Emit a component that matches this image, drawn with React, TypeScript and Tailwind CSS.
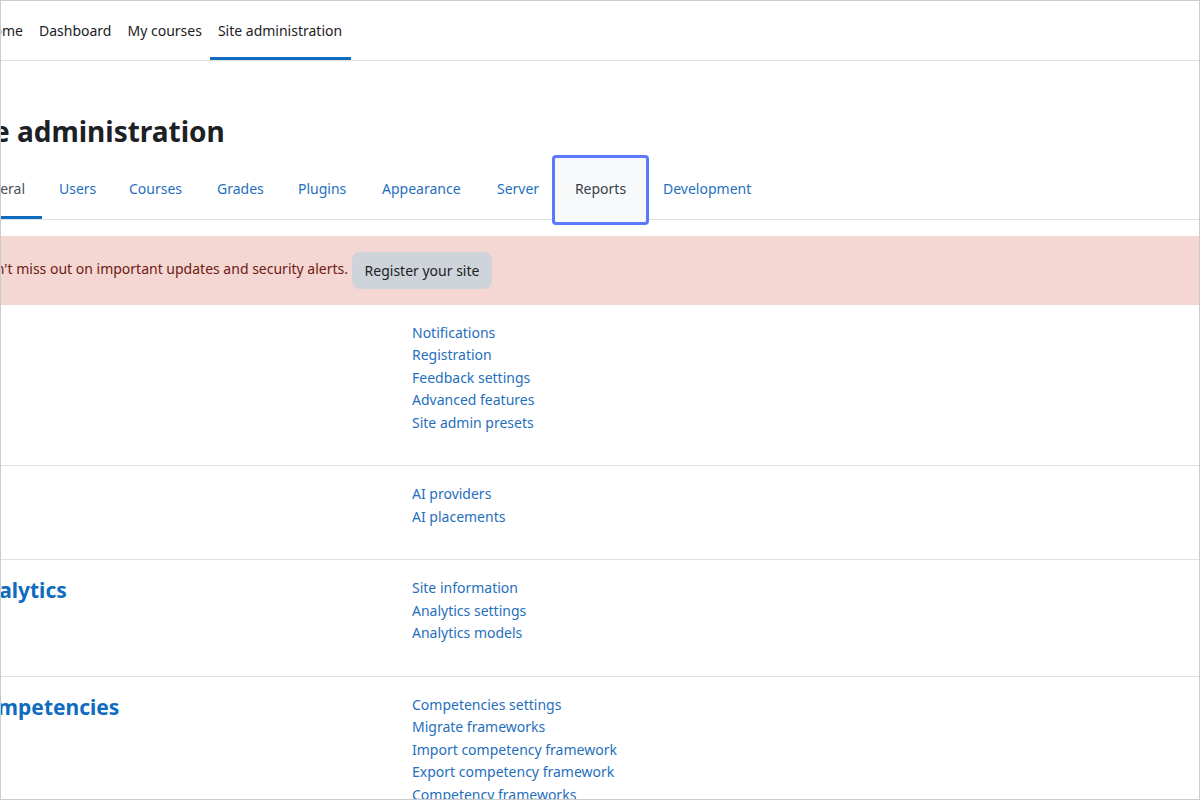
const tabs = [
  { label: "Users", w: "w-[70px]" },
  { label: "Courses", w: "w-[88px]" },
  { label: "Grades", w: "w-[81px]" },
  { label: "Plugins", w: "w-[84px]" },
  { label: "Appearance", w: "w-[115px]" },
  { label: "Server", w: "w-[55px]" },
];

const sections = [
  {
    title: "",
    indent: "",
    rowClass: "h-[161px] pt-[16.5px]",
    links: ["Notifications", "Registration", "Feedback settings", "Advanced features", "Site admin presets"],
  },
  {
    title: "",
    indent: "",
    rowClass: "h-[94px] pt-[17px]",
    links: ["AI providers", "AI placements"],
  },
  {
    title: "Analytics",
    indent: "-ml-[30px] -mt-px",
    rowClass: "h-[117px] pt-[17px]",
    links: ["Site information", "Analytics settings", "Analytics models"],
  },
  {
    title: "Competencies",
    indent: "-ml-[30px] -mt-px",
    rowClass: "pt-[16.5px]",
    links: ["Competencies settings", "Migrate frameworks", "Import competency framework", "Export competency framework", "Competency frameworks"],
  },
];

export default function App() {
  return (
    <div className="w-[1200px] h-[800px] overflow-hidden bg-white border border-[#cccccc] text-[14px] text-[#1d2125] font-['Noto_Sans',sans-serif]">
      {/* Top nav */}
      <div className="h-[60px] flex items-stretch border-b border-[#dee2e6]">
        <div className="w-[22px] overflow-hidden flex items-center justify-end whitespace-nowrap">Home</div>
        <div className="ml-[16px] flex items-center">Dashboard</div>
        <div className="ml-[16px] flex items-center">My courses</div>
        <div className="ml-[8px] w-[141px] px-[8px] pt-[3px] flex items-center border-b-[3px] border-[#0f6cbf] whitespace-nowrap">Site administration</div>
      </div>

      {/* Heading */}
      <h1 className="h-[95px] pt-[51px] whitespace-nowrap text-[28px] leading-[38px] font-bold -ml-[44px]">Site administration</h1>

      {/* Tabs */}
      <div className="h-[64px] flex items-stretch border-b border-[#dee2e6]">
        <div className="w-[41px] overflow-hidden flex items-center justify-end pr-[17px] pt-[5px] border-b-[3px] border-[#0f6cbf] text-[#495057] whitespace-nowrap">General</div>
        <div className="flex items-stretch pl-[17px] pt-[2px] text-[#1f6fbd]">
          {tabs.map((t) => (
            <div key={t.label} className={`${t.w} flex items-center`}>{t.label}</div>
          ))}
        </div>
        <div className="relative w-[97px] flex items-center justify-center pt-[2px]">
          <div className="absolute -top-px -bottom-[6px] inset-x-0 bg-[#f8f9fa] border-[3px] border-[#5b78ff] rounded-[4px]" />
          <span className="relative text-[#343f4b]">Reports</span>
        </div>
        <div className="ml-[14px] flex items-center pt-[2px] text-[#1f6fbd]">Development</div>
      </div>

      {/* Register alert */}
      <div className="mt-[16px] h-[69px] bg-[#f4d6d2] flex items-center text-[#6e1a12]">
        <div className="w-[347px] overflow-hidden flex justify-end whitespace-nowrap pb-[4px]">Don't miss out on important updates and security alerts.</div>
        <div className="ml-[4px] w-[140px] h-[37px] rounded-lg bg-[#ced4da] text-[#1d2125] flex items-center justify-center">Register your site</div>
      </div>

      {/* Admin sections */}
      {sections.map((s, i) => (
        <div key={i} className={`${s.rowClass} flex ${i < sections.length - 1 ? "border-b border-[#dee2e6]" : ""}`}>
          <div className="w-[411px] shrink-0 overflow-hidden">
            {s.title && (
              <div className={`${s.indent} text-[21px] leading-[28px] font-bold text-[#0f6cbf] whitespace-nowrap`}>{s.title}</div>
            )}
          </div>
          <div className="flex flex-col text-[#1f6fbd] leading-[22.5px]">
            {s.links.map((l) => (
              <div key={l} className="whitespace-nowrap">{l}</div>
            ))}
          </div>
        </div>
      ))}
    </div>
  );
}
